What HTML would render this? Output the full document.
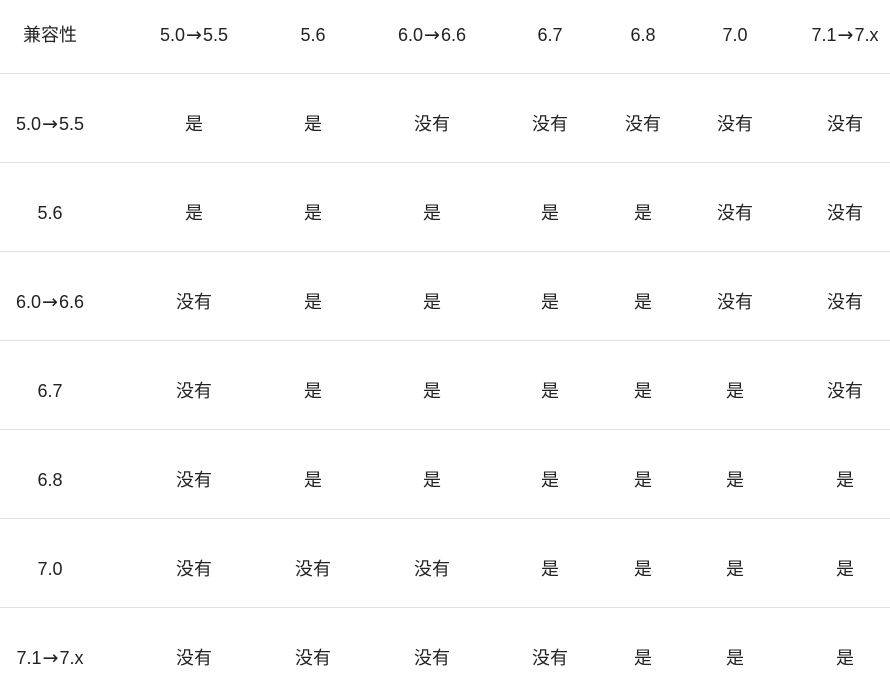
<!DOCTYPE html>
<html><head><meta charset="utf-8"><style>
body{margin:0;width:890px;height:690px;background:#fff;overflow:hidden;position:relative;font-family:"Liberation Sans","Noto Sans CJK SC",sans-serif;font-size:18px;color:#222}
.l{position:absolute;left:0;width:890px;height:1px;background:#e3e3e3}
.c{position:absolute;width:160px;margin-left:-80px;text-align:center;line-height:24px;margin-top:-12px;white-space:nowrap}
.a{font-family:"DejaVu Sans",sans-serif;font-size:19px;margin:0 1px}
</style></head><body>
<div class="l" style="top:73px"></div><div class="l" style="top:162px"></div><div class="l" style="top:251px"></div><div class="l" style="top:340px"></div><div class="l" style="top:429px"></div><div class="l" style="top:518px"></div><div class="l" style="top:607px"></div>
<script>
var xs=[50,194,313,432,550,643,735,845];
var rows=[
["兼容性","5.0→5.5","5.6","6.0→6.6","6.7","6.8","7.0","7.1→7.x"],
["5.0→5.5","是","是","没有","没有","没有","没有","没有"],
["5.6","是","是","是","是","是","没有","没有"],
["6.0→6.6","没有","是","是","是","是","没有","没有"],
["6.7","没有","是","是","是","是","是","没有"],
["6.8","没有","是","是","是","是","是","是"],
["7.0","没有","没有","没有","是","是","是","是"],
["7.1→7.x","没有","没有","没有","没有","是","是","是"]];
for(var r=0;r<8;r++)for(var c=0;c<8;c++)document.write('<div class="c" style="left:'+xs[c]+'px;top:'+(35+89*r)+'px">'+rows[r][c].replace('→','<span class="a">→</span>')+'</div>');
</script>
</body></html>
